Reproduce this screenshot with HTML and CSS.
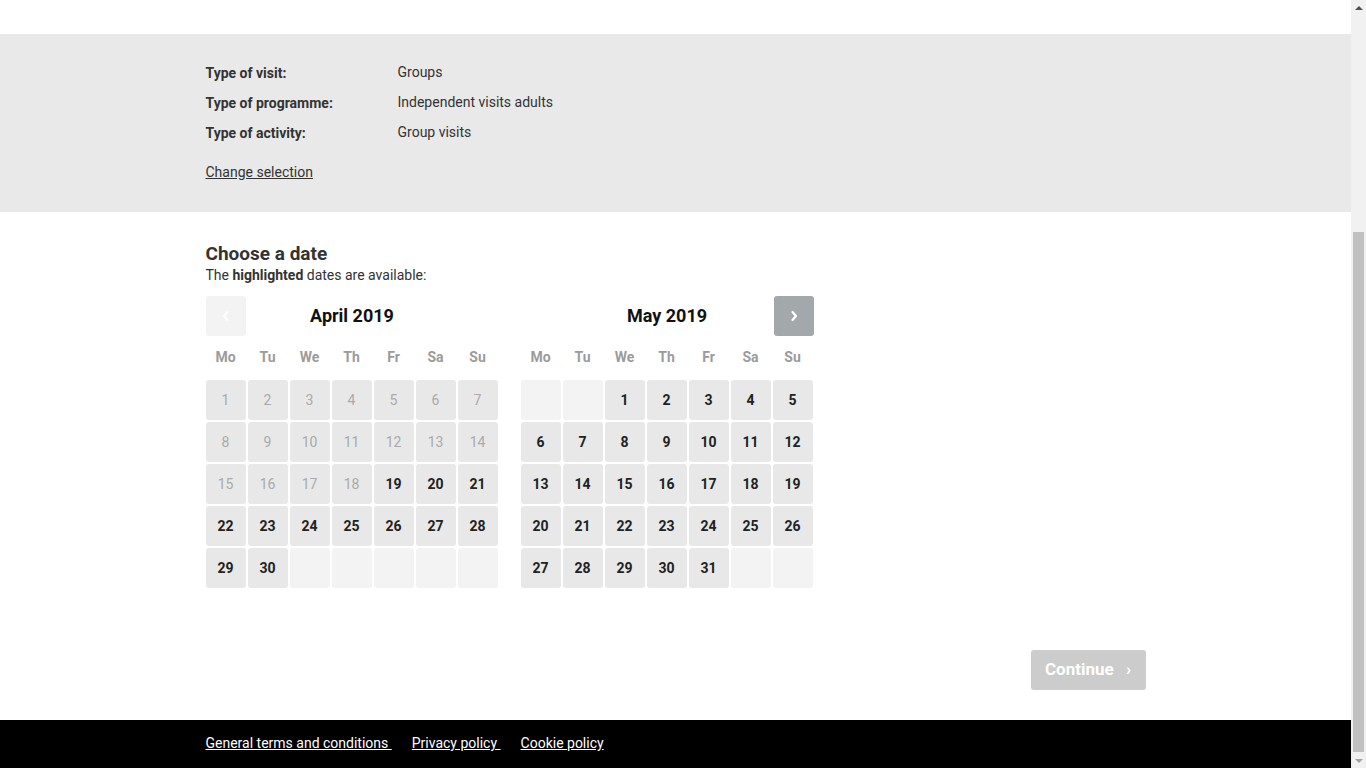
FILE: index.html
```html
<!DOCTYPE html>
<html lang="en">
<head>
<meta charset="utf-8">
<title>Choose a date</title>
<link rel="stylesheet" href="styles.css">
</head>
<body>
<div class="viewport">
  <div class="page">
    <div class="top-strip"></div>
    <section class="selection">
      <div class="container">
        <dl class="info">
          <div class="info-row"><dt>Type of visit:</dt><dd>Groups</dd></div>
          <div class="info-row"><dt>Type of programme:</dt><dd>Independent visits adults</dd></div>
          <div class="info-row"><dt>Type of activity:</dt><dd>Group visits</dd></div>
        </dl>
        <a class="change" href="#">Change selection</a>
      </div>
    </section>
    <main class="main">
      <div class="container">
        <h1 class="title">Choose a date</h1>
        <p class="subtitle">The <strong>highlighted</strong> dates are available:</p>
        <div class="months">
          <div class="month">
            <div class="month-head">
              <button class="nav nav-prev" aria-label="Previous month"><svg width="10" height="12" viewBox="0 0 10 12"><path d="M6.5 2 L3 6 L6.5 10" fill="none" stroke="#fff" stroke-width="2.2" stroke-linecap="round" stroke-linejoin="round"/></svg></button>
              <div class="month-title">April 2019</div>
              <span></span>
            </div>
            <div class="grid">
              <div class="wd">Mo</div><div class="wd">Tu</div><div class="wd">We</div><div class="wd">Th</div><div class="wd">Fr</div><div class="wd">Sa</div><div class="wd">Su</div>
              <div class="day off">1</div><div class="day off">2</div><div class="day off">3</div><div class="day off">4</div><div class="day off">5</div><div class="day off">6</div><div class="day off">7</div>
              <div class="day off">8</div><div class="day off">9</div><div class="day off">10</div><div class="day off">11</div><div class="day off">12</div><div class="day off">13</div><div class="day off">14</div>
              <div class="day off">15</div><div class="day off">16</div><div class="day off">17</div><div class="day off">18</div><div class="day on">19</div><div class="day on">20</div><div class="day on">21</div>
              <div class="day on">22</div><div class="day on">23</div><div class="day on">24</div><div class="day on">25</div><div class="day on">26</div><div class="day on">27</div><div class="day on">28</div>
              <div class="day on">29</div><div class="day on">30</div><div class="day empty"></div><div class="day empty"></div><div class="day empty"></div><div class="day empty"></div><div class="day empty"></div>
            </div>
          </div>
          <div class="month">
            <div class="month-head">
              <span></span>
              <div class="month-title">May 2019</div>
              <button class="nav nav-next" aria-label="Next month"><svg width="10" height="12" viewBox="0 0 10 12"><path d="M3.5 2 L7 6 L3.5 10" fill="none" stroke="#fff" stroke-width="2.2" stroke-linecap="round" stroke-linejoin="round"/></svg></button>
            </div>
            <div class="grid">
              <div class="wd">Mo</div><div class="wd">Tu</div><div class="wd">We</div><div class="wd">Th</div><div class="wd">Fr</div><div class="wd">Sa</div><div class="wd">Su</div>
              <div class="day empty"></div><div class="day empty"></div><div class="day on">1</div><div class="day on">2</div><div class="day on">3</div><div class="day on">4</div><div class="day on">5</div>
              <div class="day on">6</div><div class="day on">7</div><div class="day on">8</div><div class="day on">9</div><div class="day on">10</div><div class="day on">11</div><div class="day on">12</div>
              <div class="day on">13</div><div class="day on">14</div><div class="day on">15</div><div class="day on">16</div><div class="day on">17</div><div class="day on">18</div><div class="day on">19</div>
              <div class="day on">20</div><div class="day on">21</div><div class="day on">22</div><div class="day on">23</div><div class="day on">24</div><div class="day on">25</div><div class="day on">26</div>
              <div class="day on">27</div><div class="day on">28</div><div class="day on">29</div><div class="day on">30</div><div class="day on">31</div><div class="day empty"></div><div class="day empty"></div>
            </div>
          </div>
        </div>
        <div class="actions">
          <button class="continue" disabled>Continue <span class="chev">›</span></button>
        </div>
      </div>
    </main>
    <footer class="footer">
      <div class="container footer-links">
        <a href="#">General terms and conditions&nbsp;</a>
        <a href="#">Privacy policy&nbsp;</a>
        <a href="#">Cookie policy</a>
      </div>
    </footer>
  </div>
  <div class="scrollbar" aria-hidden="true">
    <div class="sb-btn sb-up"></div>
    <div class="sb-track"><div class="sb-thumb"></div></div>
    <div class="sb-btn sb-down"></div>
  </div>
</div>
</body>
</html>
```
FILE: styles.css
```css
* { box-sizing: border-box; }
html, body {
  margin: 0;
  padding: 0;
  height: 768px;
  overflow: hidden;
}
body {
  font-family: Roboto, "Liberation Sans", Arial, sans-serif;
  font-size: 14px;
  color: #333;
  background: #fff;
}
.viewport {
  display: flex;
  height: 768px;
}
.page {
  flex: 1;
  display: flex;
  flex-direction: column;
  min-width: 0;
}
.container {
  width: 940px;
  margin: 0 auto;
}
.top-strip {
  height: 34px;
  background: #fff;
}
.selection {
  background: #e9e9e9;
  padding: 27px 0 30px;
}
.info {
  margin: 0;
}
.info-row {
  display: flex;
  height: 30px;
  align-items: flex-start;
}
.info-row dt {
  width: 192px;
  font-weight: 700;
  color: #333;
  line-height: 22px;
  padding-top: 1px;
}
.info-row dd {
  margin: 0;
  line-height: 22px;
  color: #333;
}
.change {
  display: inline-block;
  margin-top: 11px;
  color: #333;
  line-height: 20px;
  text-decoration: underline;
}
.main {
  flex: 1;
  padding-top: 31px;
}
.title {
  margin: 0;
  font-size: 19px;
  line-height: 22px;
  font-weight: 700;
  color: #333;
}
.subtitle {
  margin: 0;
  line-height: 20px;
  color: #333;
}
.subtitle strong { font-weight: 700; }
.months {
  display: flex;
  gap: 22px;
  margin-top: 11px;
}
.month {
  width: 293px;
}
.month-head {
  display: grid;
  grid-template-columns: 40px 1fr 40px;
  height: 40px;
  align-items: center;
}
.month-title {
  text-align: center;
  font-size: 18px;
  font-weight: 700;
  color: #111;
  padding-bottom: 2px;
}
.nav {
  width: 40px;
  height: 40px;
  border: 0;
  border-radius: 3px;
  padding: 0;
  display: flex;
  align-items: center;
  justify-content: center;
}
.nav-prev { background: #f3f3f3; }
.nav-next { background: #a3a9aa; }
.grid {
  display: grid;
  grid-template-columns: repeat(7, 40px);
  grid-template-rows: 42px;
  grid-auto-rows: 40px;
  gap: 2px;
}
.wd {
  display: flex;
  align-items: center;
  justify-content: center;
  padding-bottom: 1px;
  font-weight: 700;
  color: #9b9b9b;
}
.day {
  display: flex;
  align-items: center;
  justify-content: center;
  border-radius: 3px;
  font-size: 14px;
}
.day.on {
  background: #e8e8e8;
  color: #222;
  font-weight: 700;
}
.day.off {
  background: #e8e8e8;
  color: #aaa;
}
.day.empty {
  background: #f3f3f3;
}
.actions {
  display: flex;
  justify-content: flex-end;
  margin-top: 62px;
}
.continue {
  width: 115px;
  height: 40px;
  border: 0;
  border-radius: 3px;
  background: #cccccc;
  color: #fff;
  font-family: inherit;
  font-size: 17px;
  font-weight: 700;
  padding: 0 0 2px;
}
.continue .chev {
  margin-left: 8px;
  font-size: 17px;
}
.footer {
  height: 48px;
  background: #000;
}
.footer-links {
  display: flex;
  gap: 20px;
  padding-top: 14px;
}
.footer-links a {
  color: #fff;
  text-decoration: underline;
  line-height: 18px;
}
.scrollbar {
  width: 15px;
  background: #f1f1f1;
  display: flex;
  flex-direction: column;
}
.sb-btn {
  height: 15px;
  display: flex;
  align-items: center;
  justify-content: center;
}
.sb-up::before {
  content: "";
  border-left: 4px solid transparent;
  border-right: 4px solid transparent;
  border-bottom: 4px solid #505050;
}
.sb-down::before {
  content: "";
  border-left: 4px solid transparent;
  border-right: 4px solid transparent;
  border-top: 4px solid #a3a3a3;
}
.sb-track {
  flex: 1;
  padding: 217px 2px 0;
}
.sb-thumb {
  height: 520px;
  background: #c1c1c1;
}
```
